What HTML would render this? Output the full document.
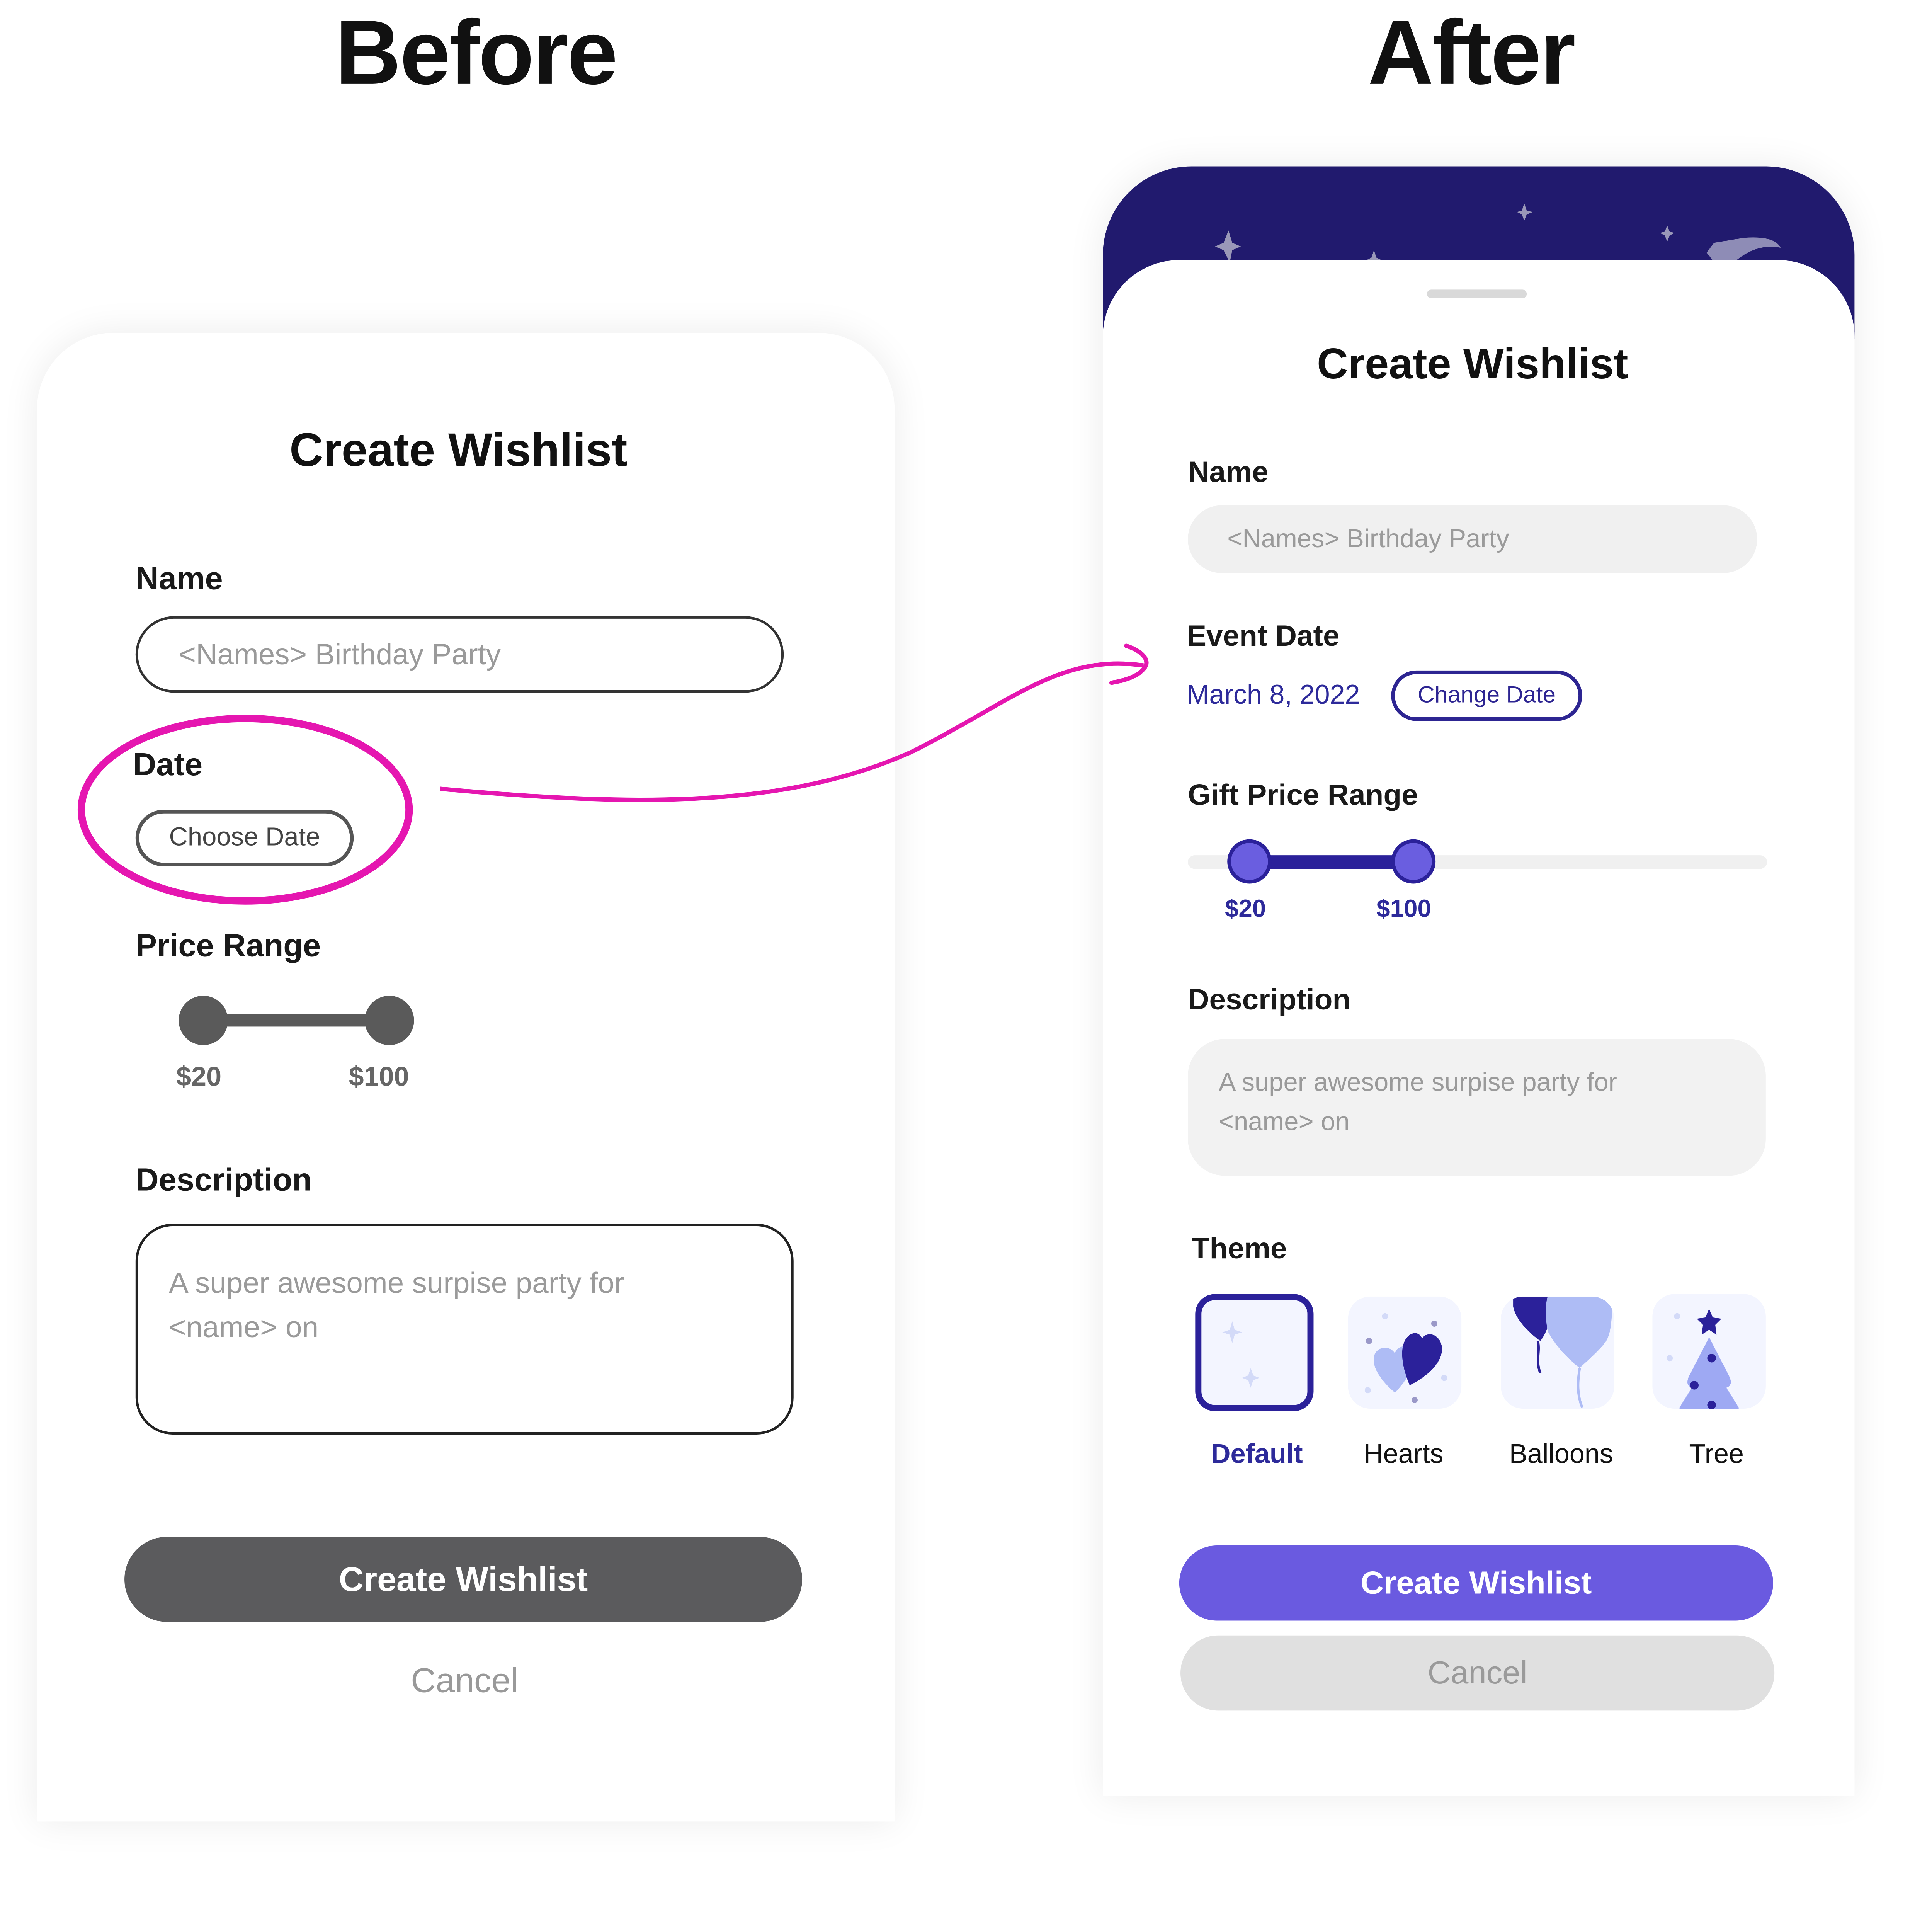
<!DOCTYPE html>
<html><head><meta charset="utf-8">
<style>
html,body{margin:0;padding:0;background:#fff;}
body{width:5134px;height:4992px;overflow:hidden;position:relative;}
#s{position:absolute;left:0;top:0;width:1610px;height:1566px;transform:scale(3.189);transform-origin:0 0;font-family:"Liberation Sans",sans-serif;}
.a{position:absolute;white-space:nowrap;}
.h{font-size:74px;font-weight:bold;color:#111;letter-spacing:-1px;}
.lb{font-size:26px;font-weight:bold;color:#1a1a1a;}
.lb2{font-size:24px;font-weight:bold;color:#1a1a1a;}
.ph{color:#9a9a9a;}
</style></head><body><div id="s">

<div class="a h" style="left:272px;top:0px;">Before</div>
<div class="a h" style="left:1110px;top:0px;">After</div>

<!-- BEFORE card -->
<div class="a" style="left:30px;top:270px;width:696px;height:1208px;background:#fff;border-radius:62px 62px 0 0;box-shadow:0 0 30px rgba(0,0,0,0.08);"></div>
<div class="a" style="left:172px;top:345px;width:400px;text-align:center;font-size:38px;font-weight:bold;color:#111;">Create Wishlist</div>
<div class="a lb" style="left:110px;top:454px;">Name</div>
<div class="a" style="left:110px;top:500px;width:522px;height:58px;border:2px solid #333;border-radius:31px;"></div>
<div class="a ph" style="left:145px;top:518px;font-size:24px;">&lt;Names&gt; Birthday Party</div>
<div class="a lb" style="left:108px;top:605px;">Date</div>
<div class="a" style="left:110px;top:657px;width:171px;height:40px;border:3px solid #555;border-radius:23px;text-align:center;line-height:40px;font-size:21px;color:#444;">Choose Date</div>
<div class="a lb" style="left:110px;top:752px;">Price Range</div>
<div class="a" style="left:165px;top:823px;width:151px;height:10px;background:#5a5a5a;"></div>
<div class="a" style="left:145px;top:808px;width:40px;height:40px;border-radius:50%;background:#5a5a5a;"></div>
<div class="a" style="left:296px;top:808px;width:40px;height:40px;border-radius:50%;background:#5a5a5a;"></div>
<div class="a" style="left:143px;top:861px;font-size:22px;font-weight:bold;color:#666;">$20</div>
<div class="a" style="left:283px;top:861px;font-size:22px;font-weight:bold;color:#666;">$100</div>
<div class="a lb" style="left:110px;top:942px;">Description</div>
<div class="a" style="left:110px;top:993px;width:530px;height:167px;border:2px solid #222;border-radius:30px;"></div>
<div class="a ph" style="left:137px;top:1024px;font-size:24px;line-height:36px;">A super awesome surpise party for<br>&lt;name&gt; on</div>
<div class="a" style="left:101px;top:1247px;width:550px;height:69px;background:#5b5b5d;border-radius:35px;text-align:center;line-height:69px;font-size:28px;font-weight:bold;color:#fff;">Create Wishlist</div>
<div class="a" style="left:277px;top:1348px;width:200px;text-align:center;font-size:28px;color:#999;">Cancel</div>

<!-- AFTER card -->
<div class="a" style="left:895px;top:135px;width:610px;height:1322px;background:#fff;border-radius:72px 72px 0 0;box-shadow:0 0 30px rgba(0,0,0,0.08);overflow:hidden;">
  <div class="a" style="left:0;top:0;width:610px;height:140px;background:#211a6e;"></div>
  <svg class="a" style="left:0;top:0;" width="610" height="140">
    <path d="M102 52 L105 62 L112 65 L105 68 L103 78 L98 68 L91 65 L98 62Z" fill="#9a98b8"/>
    <path d="M342 30 L344 36 L349 37 L344 39 L342 44 L340 39 L336 37 L340 36Z" fill="#9a98b8"/>
    <path d="M458 48 L460 53 L464 54 L460 56 L458 61 L456 56 L452 54 L456 53Z" fill="#9a98b8"/>
    <path d="M220 68 L222 74 L226 76 L222 78 L220 82 L218 78 L214 76 L218 74Z" fill="#9a98b8"/>
    <path d="M490 70 L496 62 L520 58 Q545 56 550 66 Q530 62 512 78 L498 80Z" fill="#8e8cb6"/>
  </svg>
  <div class="a" style="left:0;top:76px;width:610px;height:1300px;background:#fff;border-radius:62px 62px 0 0;"></div>
</div>
<div class="a" style="left:1158px;top:235px;width:81px;height:7px;background:#d9d9d9;border-radius:4px;"></div>
<div class="a" style="left:995px;top:276px;width:400px;text-align:center;font-size:35px;font-weight:bold;color:#111;">Create Wishlist</div>
<div class="a lb2" style="left:964px;top:370px;">Name</div>
<div class="a" style="left:964px;top:410px;width:462px;height:55px;background:#f0f0f0;border-radius:28px;"></div>
<div class="a ph" style="left:996px;top:426px;font-size:21px;">&lt;Names&gt; Birthday Party</div>
<div class="a lb2" style="left:963px;top:503px;">Event Date</div>
<div class="a" style="left:963px;top:551px;font-size:22px;color:#2d2a9a;">March 8, 2022</div>
<div class="a" style="left:1129px;top:544px;width:149px;height:35px;border:3px solid #2d2592;border-radius:21px;text-align:center;line-height:35px;font-size:19px;color:#2d2592;">Change Date</div>
<div class="a lb2" style="left:964px;top:632px;">Gift Price Range</div>
<div class="a" style="left:964px;top:694px;width:470px;height:11px;background:#f0f0f0;border-radius:6px;"></div>
<div class="a" style="left:1013px;top:694px;width:133px;height:11px;background:#2b219a;"></div>
<div class="a" style="left:996px;top:681px;width:30px;height:30px;border-radius:50%;background:#6a5ee0;border:3px solid #2b219a;"></div>
<div class="a" style="left:1129px;top:681px;width:30px;height:30px;border-radius:50%;background:#6a5ee0;border:3px solid #2b219a;"></div>
<div class="a" style="left:994px;top:727px;font-size:20px;font-weight:bold;color:#2d2a9a;">$20</div>
<div class="a" style="left:1117px;top:727px;font-size:20px;font-weight:bold;color:#2d2a9a;">$100</div>
<div class="a lb2" style="left:964px;top:798px;">Description</div>
<div class="a" style="left:964px;top:843px;width:469px;height:111px;background:#f2f2f2;border-radius:30px;"></div>
<div class="a ph" style="left:989px;top:863px;font-size:21px;line-height:32px;">A super awesome surpise party for<br>&lt;name&gt; on</div>
<div class="a lb2" style="left:967px;top:1000px;">Theme</div>

<!-- Theme tiles -->
<div class="a" style="left:970px;top:1050px;width:86px;height:85px;background:#f3f5ff;border:5px solid #2b219a;border-radius:16px;"></div>
<svg class="a" style="left:970px;top:1050px;" width="96" height="95">
  <path d="M30 22 L32 29 L38 31 L32 33 L30 40 L28 33 L22 31 L28 29Z" fill="#d3daf8"/>
  <path d="M45 60 L47 66 L52 68 L47 70 L45 76 L43 70 L38 68 L43 66Z" fill="#d3daf8"/>
</svg>
<div class="a" style="left:1094px;top:1052px;width:92px;height:91px;background:#f3f5ff;border-radius:18px;overflow:hidden;">
  <svg width="92" height="91">
    <path d="M38 78 C24 66 18 54 22 46 C26 40 34 40 38 46 C40 40 48 38 52 44 C56 52 50 66 38 78Z" fill="#aebcf5"/>
    <path d="M50 72 C44 58 42 44 46 36 C50 28 58 28 60 34 C64 28 74 30 76 40 C78 52 66 64 50 72Z" fill="#2b219a"/>
    <circle cx="30" cy="16" r="2.5" fill="#d3daf8"/><circle cx="70" cy="22" r="2.5" fill="#9a98c8"/>
    <circle cx="17" cy="36" r="2.5" fill="#9a98c8"/><circle cx="54" cy="84" r="2.5" fill="#9a98c8"/>
    <circle cx="16" cy="76" r="2.5" fill="#d3daf8"/><circle cx="78" cy="66" r="2.5" fill="#d3daf8"/>
  </svg>
</div>
<div class="a" style="left:1218px;top:1052px;width:92px;height:91px;background:#f3f5ff;border-radius:18px;overflow:hidden;">
  <svg width="92" height="91">
    <path d="M10 0 L40 0 L38 25 C36 30 34 34 32 36 C26 32 12 20 10 8Z" fill="#2b219a"/>
    <path d="M30 36 C32 45 28 52 32 62" stroke="#2b219a" stroke-width="2" fill="none"/>
    <path d="M38 0 L90 0 C90 0 92 30 84 38 C78 46 70 52 64 58 C56 52 44 40 38 28 C36 18 36 6 38 0Z" fill="#aebcf5"/>
    <path d="M64 58 C62 70 62 80 66 90" stroke="#aebcf5" stroke-width="2" fill="none"/>
  </svg>
</div>
<div class="a" style="left:1341px;top:1050px;width:92px;height:93px;background:#f3f5ff;border-radius:18px;overflow:hidden;">
  <svg width="92" height="93">
    <path d="M46 12 L49 19 L56 20 L51 25 L52 33 L46 29 L40 33 L41 25 L36 20 L43 19Z" fill="#2b219a"/>
    <path d="M46 35 L62 66 Q66 74 60 76 L70 92 L70 95 L22 95 L22 92 L32 76 Q26 74 30 66Z" fill="#9ea9f3"/>
    <circle cx="48" cy="52" r="3.5" fill="#2b219a"/><circle cx="34" cy="74" r="3.5" fill="#2b219a"/><circle cx="48" cy="90" r="3.5" fill="#2b219a"/>
    <circle cx="20" cy="18" r="2.5" fill="#d3daf8"/><circle cx="14" cy="52" r="2.5" fill="#d3daf8"/>
  </svg>
</div>
<div class="a" style="left:960px;top:1167px;width:120px;text-align:center;font-size:22px;font-weight:bold;color:#2d2a9a;">Default</div>
<div class="a" style="left:1079px;top:1167px;width:120px;text-align:center;font-size:22px;color:#111;">Hearts</div>
<div class="a" style="left:1207px;top:1167px;width:120px;text-align:center;font-size:22px;color:#111;">Balloons</div>
<div class="a" style="left:1333px;top:1167px;width:120px;text-align:center;font-size:22px;color:#111;">Tree</div>

<div class="a" style="left:957px;top:1254px;width:482px;height:61px;background:#6a5ae0;border-radius:31px;text-align:center;line-height:61px;font-size:26px;font-weight:bold;color:#fff;">Create Wishlist</div>
<div class="a" style="left:958px;top:1327px;width:482px;height:61px;background:#e0e0e0;border-radius:31px;text-align:center;line-height:61px;font-size:26px;color:#9a9a9a;">Cancel</div>

<!-- pink annotation -->
<svg class="a" style="left:0;top:0;" width="1610" height="1566">
  <ellipse cx="199" cy="657" rx="133" ry="74" fill="none" stroke="#e516b0" stroke-width="6"/>
  <path d="M357 640 C520 655 640 655 740 610 C820 570 860 530 928 540" fill="none" stroke="#e516b0" stroke-width="3.5"/>
  <path d="M914 524 C926 528 932 534 930 540 C926 548 914 552 902 554" fill="none" stroke="#e516b0" stroke-width="3.5" stroke-linecap="round"/>
</svg>

</div></body></html>
